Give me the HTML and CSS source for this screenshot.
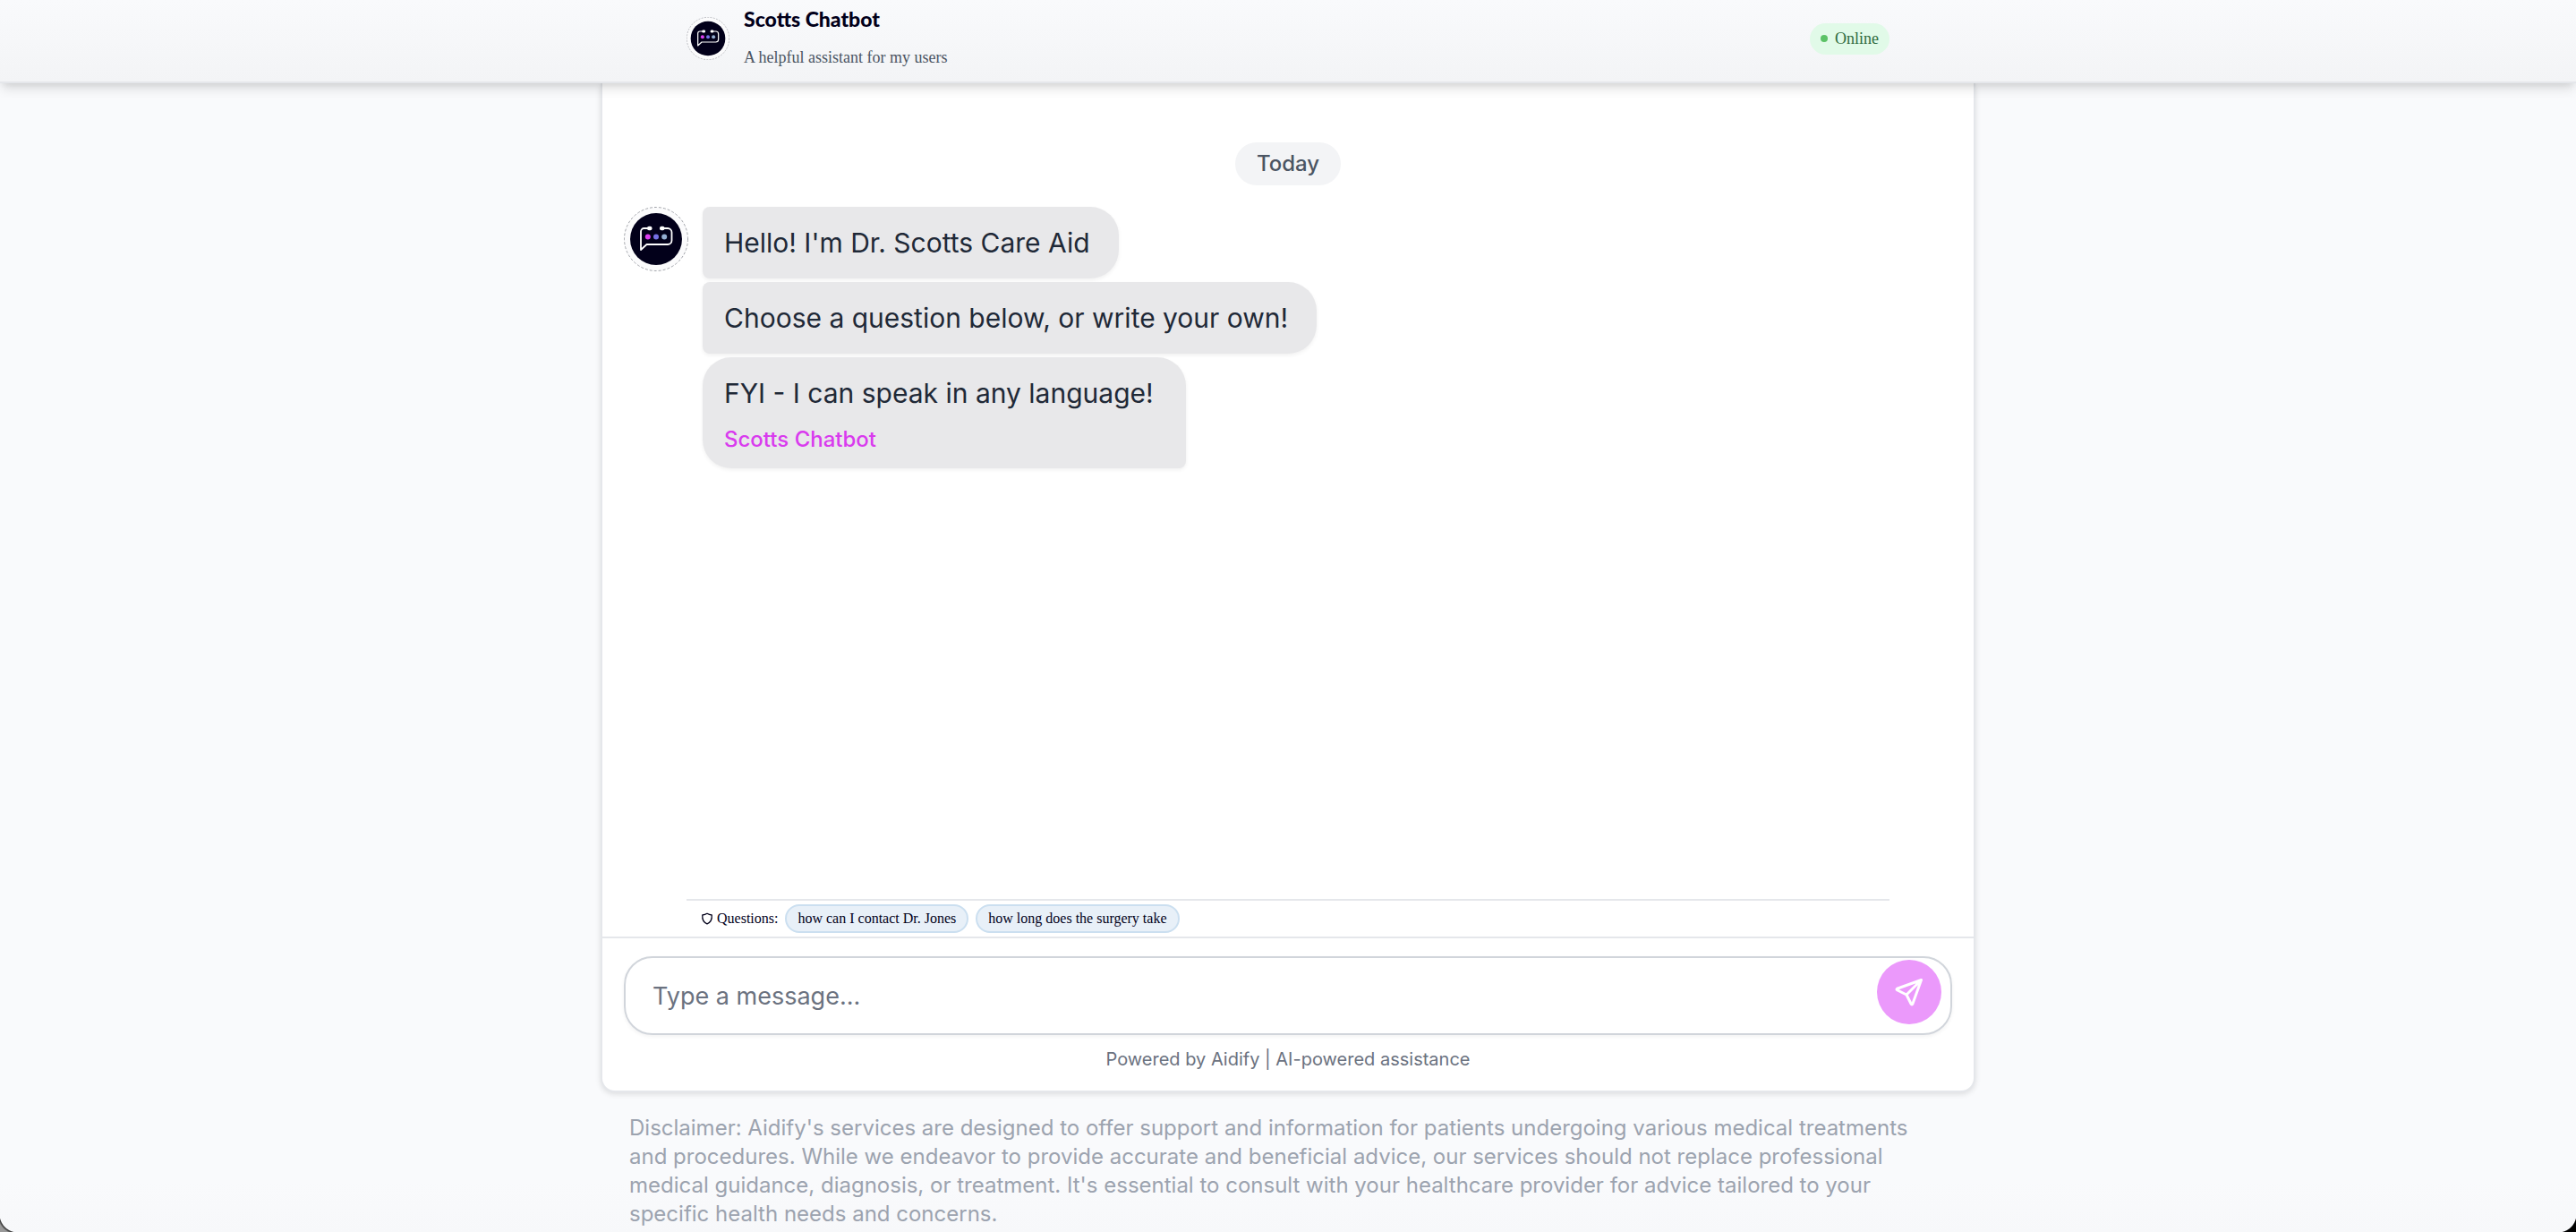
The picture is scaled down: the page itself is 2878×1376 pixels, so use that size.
FILE: index.html
```
<!DOCTYPE html>
<html lang="en">
<head>
<meta charset="utf-8">
<meta name="viewport" content="width=device-width, initial-scale=1">
<title>Scotts Chatbot</title>
<link rel="stylesheet" href="styles.css">
</head>
<body>
<svg class="sprite" aria-hidden="true">
  <symbol id="bot" viewBox="0 0 72 72">
    <circle cx="36" cy="36" r="35.5" fill="#fbfbfc" stroke="#a3a5ab" stroke-width="1" stroke-dasharray="3 2"/>
    <circle cx="36" cy="36" r="29" fill="#02001a"/>
    <path d="M28 24H22.5a3.5 3.5 0 0 0-3.5 3.5V48l6.500-6H49a4.500 4.500 0 0 0 4.500-4.500V28.500A4.500 4.500 0 0 0 49 24h-6" fill="none" stroke="#fff" stroke-width="1.8" stroke-linejoin="round"/>
    <rect x="26" y="21.800" width="5.500" height="4.400" rx="2" fill="#fff"/>
    <rect x="40" y="21.800" width="5.500" height="4.400" rx="2" fill="#fff"/>
    <circle cx="26.800" cy="33.400" r="3" fill="#dc3df0"/>
    <circle cx="36" cy="33.400" r="3" fill="#7470e4"/>
    <circle cx="45.200" cy="33.400" r="3" fill="#94aed2"/>
  </symbol>
</svg>

<header class="topbar">
  <div class="topbar-inner">
    <svg class="logo" role="img" aria-label="Scotts Chatbot logo"><use href="#bot"/></svg>
    <div class="brand">
      <h1 class="brand-name">Scotts Chatbot</h1>
      <p class="brand-tagline">A helpful assistant for my users</p>
    </div>
    <span class="status"><span class="status-dot"></span>Online</span>
  </div>
</header>

<main class="chat">
  <section class="messages" aria-label="Messages">
    <div class="day">Today</div>
    <div class="message-group">
      <svg class="avatar" aria-hidden="true"><use href="#bot"/></svg>
      <div class="bubbles">
        <p class="bubble">Hello! I'm Dr. Scotts Care Aid</p>
        <p class="bubble">Choose a question below, or write your own!</p>
        <div class="bubble bubble-last">
          <p>FYI - I can speak in any language!</p>
          <p class="sender">Scotts Chatbot</p>
        </div>
      </div>
    </div>
  </section>

  <div class="questions">
    <span class="questions-label">
      <svg class="questions-icon" viewBox="0 0 14 14" aria-hidden="true"><path d="M7 1.300C8.600 2.400 10.300 2.900 12.200 3c.4 4.200-.7 7.900-5.200 9.800C2.500 10.900 1.400 7.200 1.800 3 3.700 2.900 5.400 2.400 7 1.300Z" fill="none" stroke="#02001a" stroke-width="1.300" stroke-linejoin="round"/></svg>
      Questions:
    </span>
    <button class="chip" type="button">how can I contact Dr. Jones</button>
    <button class="chip" type="button">how long does the surgery take</button>
  </div>

  <form class="composer">
    <div class="field">
      <input class="field-input" type="text" placeholder="Type a message..." aria-label="Type a message">
      <button class="send" type="button" aria-label="Send">
        <svg class="send-icon" viewBox="0 0 24 24" fill="none" stroke="#fff" stroke-width="2" stroke-linecap="round" stroke-linejoin="round"><path d="M10 14L21 3M21 3l-6.500 18a.55.55 0 0 1-1 0L10 14l-7-3.500a.55.55 0 0 1 0-1L21 3"/></svg>
      </button>
    </div>
    <p class="powered">Powered by Aidify | AI-powered assistance</p>
  </form>
</main>

<footer class="disclaimer">Disclaimer: Aidify's services are designed to offer support and information for patients undergoing various medical treatments and procedures. While we endeavor to provide accurate and beneficial advice, our services should not replace professional medical guidance, diagnosis, or treatment. It's essential to consult with your healthcare provider for advice tailored to your specific health needs and concerns.</footer>
</body>
</html>
```
FILE: styles.css
```
* {
  box-sizing: border-box;
}

body,
h1,
p {
  margin: 0;
}

body {
  display: flex;
  flex-direction: column;
  min-height: 100vh;
  background: linear-gradient(#f9fafc 96%, #f7f8fa);
  font-family: Inter, "Noto Sans", sans-serif;
}

/* Rounded window corners */
body::before,
body::after {
  content: "";
  position: fixed;
  bottom: 0;
  width: 20px;
  height: 20px;
}

body::before {
  left: 0;
  background: radial-gradient(circle at 100% 0, transparent 20px, #333 21px, #999 23px);
}

body::after {
  right: 0;
  background: radial-gradient(circle at 0 0, transparent 20px, #000 21px);
}

.sprite {
  position: absolute;
  width: 0;
  height: 0;
}

.topbar {
  position: relative;
  z-index: 1;
  padding-bottom: 5px;
  border-bottom: 2px solid #e5e7eb;
  background: linear-gradient(#f9fafc, #f3f4f6);
  box-shadow: 0 8px 12px -2px rgba(0, 0, 0, 0.12), 0 4px 8px -4px rgba(0, 0, 0, 0.1);
  font-family: "Liberation Serif", serif;
}

.topbar-inner {
  display: flex;
  align-items: center;
  gap: 16px;
  max-width: 1344px;
  margin: 0 auto;
}

.logo {
  width: 48px;
  height: 48px;
}

.brand {
  flex: 1;
}

.brand-name {
  color: #02001a;
  font: 900 23px/42px Lato, sans-serif;
}

.brand-tagline {
  color: #4b5563;
  font-size: 18px;
  line-height: 44px;
}

.status {
  display: flex;
  align-items: center;
  gap: 8px;
  padding: 0 12px;
  border-radius: 18px;
  background: #e1fae8;
  color: #2f6b40;
  font-size: 18px;
  line-height: 35px;
}

.status-dot {
  width: 8px;
  height: 8px;
  border-radius: 50%;
  background: #5bc266;
}

.chat {
  flex: 1;
  display: flex;
  flex-direction: column;
  width: 100%;
  max-width: 1536px;
  margin: 0 auto;
  border: 2px solid #e5e7eb;
  border-top: 0;
  border-radius: 0 0 16px 16px;
  background: #fff;
  box-shadow: 0 2px 6px rgba(0, 0, 0, 0.12);
}

.messages {
  flex: 1;
  padding: 66px 24px 24px;
}

.day {
  width: fit-content;
  margin: 0 auto 24px;
  padding: 0 24px;
  border-radius: 24px;
  background: #f3f4f6;
  color: #4b5563;
  font-size: 24px;
  font-weight: 500;
  line-height: 48px;
}

.message-group {
  display: flex;
  align-items: flex-start;
  gap: 16px;
}

.avatar {
  flex: none;
  width: 72px;
  height: 72px;
}

.bubbles {
  display: flex;
  flex-direction: column;
  align-items: flex-start;
  gap: 4px;
}

.bubble {
  padding: 16px 32px 16px 24px;
  border-radius: 8px 32px 32px 8px;
  background: #e8e8ea;
  box-shadow: 0 2px 4px rgba(0, 0, 0, 0.06);
  color: #1f2937;
  font-size: 30px;
  line-height: 48px;
}

.bubble-last {
  padding-right: 36px;
  border-radius: 32px 32px 8px 32px;
}

.sender {
  margin-top: 12px;
  color: #d93bee;
  font-size: 24px;
  font-weight: 500;
  line-height: 32px;
}

.questions {
  display: flex;
  align-items: center;
  gap: 8px;
  width: calc(100% - 188px);
  margin: 0 auto;
  padding: 4px 16px;
  border-top: 2px solid #e5e7eb;
  color: #02001a;
  font-family: "Liberation Serif", serif;
  font-size: 16px;
}

.questions-label {
  display: flex;
  align-items: center;
  gap: 4px;
}

.questions-icon {
  width: 14px;
  height: 14px;
}

.chip {
  padding: 0 12px;
  border: 2px solid #cbdff0;
  border-radius: 16px;
  background: #e8f0f8;
  color: inherit;
  font: inherit;
  line-height: 28px;
}

.composer {
  padding: 20px 24px;
  border-top: 2px solid #e5e7eb;
}

.field {
  display: flex;
  align-items: flex-start;
  padding: 2px 10px 2px 30px;
  border: 2px solid #d1d5db;
  border-radius: 32px;
  box-shadow: 0 2px 4px rgba(0, 0, 0, 0.05);
}

.field-input {
  flex: 1;
  min-width: 0;
  height: 80px;
  padding: 0;
  border: 0;
  outline: 0;
  background: none;
  color: #1f2937;
  font: 27px/32px Inter, "Noto Sans", sans-serif;
}

.field-input::placeholder {
  color: #6b7280;
  opacity: 1;
}

.send {
  display: grid;
  place-items: center;
  width: 72px;
  height: 72px;
  padding: 0;
  border: 0;
  border-radius: 50%;
  background: #eb99fb;
}

.send-icon {
  width: 36px;
  height: 36px;
}

.powered {
  margin-top: 12px;
  color: #6b7280;
  font-size: 20px;
  line-height: 30px;
  text-align: center;
}

.disclaimer {
  width: 100%;
  max-width: 1536px;
  margin: 0 auto;
  padding: 24px 32px 4px;
  color: #9ca3af;
  font-size: 24px;
  line-height: 32px;
}
```
